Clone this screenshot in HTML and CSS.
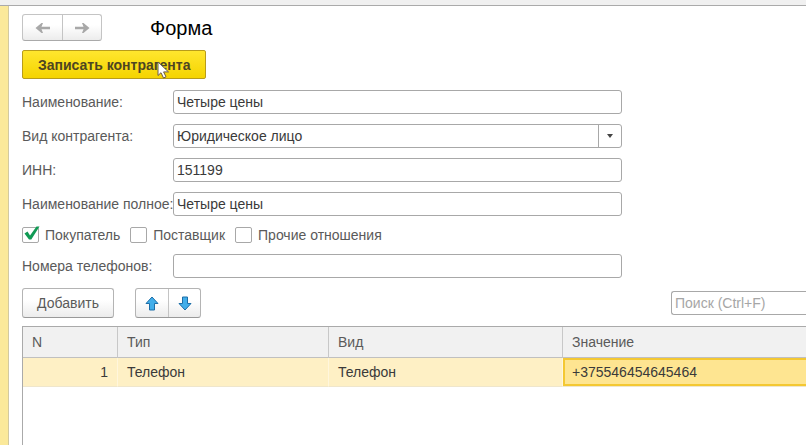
FILE: index.html
```html
<!DOCTYPE html>
<html lang="ru">
<head>
<meta charset="utf-8">
<title>Форма</title>
<link rel="stylesheet" href="styles.css">
</head>
<body>
<div class="topbar"></div>
<main class="window">
  <header class="head">
    <div class="group nav">
      <button type="button" aria-label="Назад"><svg width="16" height="12" viewBox="0 0 16 12"><path d="M.5 6 6.500 1H8L6.500 4.700H15v2.600H6.500L8 11H6.500z" fill="#a8a8a8"/></svg></button>
      <button type="button" aria-label="Вперёд"><svg width="16" height="12" viewBox="0 0 16 12"><path d="M15.500 6 9.500 1H8l1.500 3.700H1v2.600h8.500L8 11h1.500z" fill="#a8a8a8"/></svg></button>
    </div>
    <h1>Форма</h1>
  </header>
  <button type="button" class="primary">Записать контрагента
    <svg class="cursor" width="13" height="18" viewBox="0 0 13 18"><path d="M1 1v13.500l3-2.800 2.500 5.300 2.500-1.200-2.400-4.900H11.500z" fill="#fff" stroke="#6b5a4a" stroke-width="1"/></svg>
  </button>
  <form class="fields">
    <div class="field"><label for="name">Наименование:</label><input id="name" type="text" value="Четыре цены"></div>
    <div class="field"><label for="kind">Вид контрагента:</label>
      <div class="combo">
        <select id="kind"><option>Юридическое лицо</option></select>
        <span class="drop"><svg width="6" height="4" viewBox="0 0 6 4"><path d="M0 0h6L3 4z" fill="#444"/></svg></span>
      </div>
    </div>
    <div class="field"><label for="inn">ИНН:</label><input id="inn" type="text" value="151199"></div>
    <div class="field"><label for="full">Наименование полное:</label><input id="full" type="text" value="Четыре цены"></div>
    <div class="checks">
      <label><input type="checkbox" checked><svg class="tick" width="17" height="17" viewBox="0 0 17 17"><path d="M1.500 7.500 4.500 5.500l2.500 4L13.500.5h3L8.300 13.500H6z" fill="#109a54"/></svg>Покупатель</label>
      <label><input type="checkbox">Поставщик</label>
      <label><input type="checkbox">Прочие отношения</label>
    </div>
    <div class="field"><label for="phones">Номера телефонов:</label><input id="phones" type="text"></div>
  </form>
  <div class="toolbar">
    <button type="button" class="add">Добавить</button>
    <div class="group move">
      <button type="button" aria-label="Вверх"><svg width="14" height="15" viewBox="0 0 14 15"><path d="M7 1 13 7.500H9.500V14h-5V7.500H1z" fill="#42aeea" stroke="#1d6ea8" stroke-linejoin="round"/></svg></button>
      <button type="button" aria-label="Вниз"><svg width="14" height="15" viewBox="0 0 14 15"><path d="M7 14 1 7.500h3.500V1h5v6.500H13z" fill="#42aeea" stroke="#1d6ea8" stroke-linejoin="round"/></svg></button>
    </div>
    <input class="search" type="search" placeholder="Поиск (Ctrl+F)" aria-label="Поиск">
  </div>
  <div class="grid">
    <table>
      <colgroup><col class="c-n"><col class="c-type"><col class="c-kind"><col></colgroup>
      <thead><tr><th>N</th><th>Тип</th><th>Вид</th><th>Значение</th></tr></thead>
      <tbody><tr><td class="num">1</td><td>Телефон</td><td>Телефон</td><td class="active">+375546454645464</td></tr></tbody>
    </table>
  </div>
</main>
</body>
</html>
```
FILE: styles.css
```css
* { box-sizing: border-box; }
body {
  margin: 0;
  min-height: 100vh;
  display: flex;
  flex-direction: column;
  background: #fff;
  color: #3a3a3a;
  font: 14px/16px "Liberation Sans", Arial, sans-serif;
}
button, input, select { font: inherit; color: inherit; margin: 0; }
svg { display: block; }
.topbar { height: 6px; background: #f0f0f0; border-bottom: 1px solid #aaa; }
.window {
  flex: 1;
  display: flex;
  flex-direction: column;
  align-items: flex-start;
  padding: 8px 0 0 14px;
  border-left: 8px solid #fbe99a;
  box-shadow: inset 1px 0 #d2c9a0;
}
.head { display: flex; align-items: center; gap: 48px; }
h1 { margin: 0; font-size: 20px; line-height: 24px; font-weight: 400; color: #000; }
.group {
  display: flex;
  border: 1px solid #b4b4b4;
  border-bottom-color: #999;
  border-radius: 3px;
  background: linear-gradient(#fff 40%, #ececec);
}
.group button {
  display: flex;
  align-items: center;
  justify-content: center;
  padding: 0;
  border: 0;
  background: none;
}
.group button + button { border-left: 1px solid #c4c4c4; }
.nav { border-color: #c4c4c4; border-bottom-color: #aaa; }
.nav button { width: 39px; height: 25px; }
.primary {
  position: relative;
  height: 29px;
  margin-top: 9px;
  padding: 0 15px;
  border: 1px solid #b89c1a;
  border-radius: 2px;
  background: linear-gradient(#ffe62e, #f5d400);
  color: #4d4522;
  font-weight: 700;
}
.cursor { position: absolute; left: 134px; top: 10px; }
.fields { display: flex; flex-direction: column; gap: 10px; margin-top: 11px; }
.field { display: grid; grid-template-columns: 151px 449px; align-items: center; }
.field label, .checks { color: #5a5a5a; white-space: nowrap; }
.field input, .combo, .search {
  width: 100%;
  height: 24px;
  padding: 0 3px;
  border: 1px solid #a8a8a8;
  border-radius: 3px;
  background: #fff;
}
.combo { display: flex; padding: 0; }
.combo select {
  flex: 1;
  appearance: none;
  padding: 0 3px;
  border: 0;
  background: none;
}
.drop {
  width: 23px;
  display: flex;
  align-items: center;
  justify-content: center;
  border-left: 1px solid #a8a8a8;
}
.checks { display: flex; gap: 10px; margin: 1px 0; }
.checks label { position: relative; display: flex; align-items: center; gap: 6px; }
.checks input {
  appearance: none;
  width: 17px;
  height: 16px;
  border: 1px solid #a8a8a8;
  border-radius: 2px;
  background: #fff;
}
.tick { position: absolute; left: 1px; top: -1px; }
.toolbar { display: flex; align-items: center; align-self: stretch; margin-top: 10px; }
.add {
  width: 92px;
  height: 30px;
  padding: 0;
  border: 1px solid #b4b4b4;
  border-bottom-color: #999;
  border-radius: 3px;
  background: linear-gradient(#fff 40%, #ececec);
  color: #5a5a5a;
}
.move { margin-left: 21px; }
.move button { width: 32px; height: 28px; }
.search {
  width: 135px;
  margin-left: auto;
  border-right: 0;
  border-radius: 3px 0 0 3px;
}
.search::placeholder { color: #a6a6a6; }
.grid {
  flex: 1;
  align-self: stretch;
  margin-top: 8px;
  border: solid #aaa;
  border-width: 1px 0 0 1px;
}
table { width: 100%; table-layout: fixed; border-collapse: separate; border-spacing: 0; }
.c-n { width: 95px; }
.c-type { width: 211px; }
.c-kind { width: 234px; }
th, td { padding: 0 9px; text-align: left; font-weight: 400; }
th {
  height: 31px;
  background: #f1f1f1;
  border-bottom: 1px solid #c0c0c0;
  border-right: 1px solid #c8c8c8;
  color: #5a5a5a;
}
td {
  height: 29px;
  background: #fef0c5;
  border-bottom: 1px solid #efe6cc;
  border-right: 1px solid #fff6dc;
}
th:last-child { border-right: 0; }
.num { text-align: right; }
td.active { border-right: 0; background: #fee591; box-shadow: inset 2px 2px #f4c832, inset 0 -2px #f4c832; }
```
